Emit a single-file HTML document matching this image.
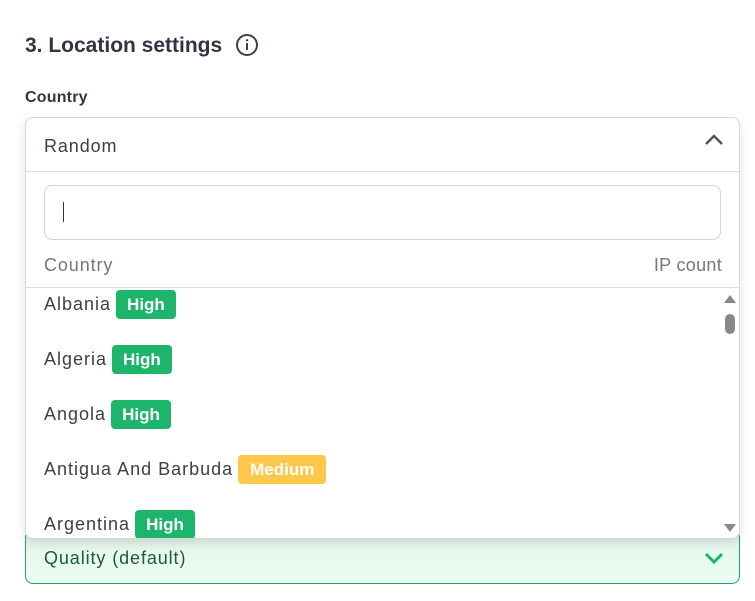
<!DOCTYPE html>
<html><head><style>
body{margin:0;width:755px;height:601px;background:#fff;font-family:"Liberation Sans",sans-serif;position:relative;overflow:hidden;color:#3b404b}
.abs{position:absolute}
h1{position:absolute;left:25px;top:34px;margin:0;font-size:21px;font-weight:bold;color:#2f3542}
.lbl{left:25px;top:89px;font-size:16px;font-weight:bold;color:#2f3542;letter-spacing:.2px}
.t{letter-spacing:.9px}
.qual{left:25px;top:530px;width:713px;height:52px;border:1px solid #20a66a;border-radius:8px;background:linear-gradient(#e3f5ea,#ecfdf2);}
.qual span{position:absolute;left:18px;top:17px;font-size:18px;color:#1e5a3a;letter-spacing:.9px}
.dd{left:25px;top:117px;width:713px;height:420px;border:1px solid #d8d8d8;border-radius:8px;background:#fff;box-shadow:0 4px 10px rgba(0,0,0,.12);overflow:hidden}
.row{position:absolute;left:18px;font-size:18px;display:flex;align-items:center;height:30px;letter-spacing:1px}
.b{display:inline-block;margin-left:5px;padding:0 11px;height:29px;line-height:29px;border-radius:4px;color:#fff;font-weight:bold;font-size:17px;background:#1db46c;letter-spacing:0}
.m{background:#fec84b;padding:0 12px}
</style></head><body>
<h1>3. Location settings</h1>
<svg class="abs" style="left:235px;top:33px" width="24" height="24" viewBox="0 0 24 24"><circle cx="12" cy="12" r="10" fill="none" stroke="#3b404b" stroke-width="2"/><rect x="11" y="10" width="2" height="7" fill="#3b404b"/><circle cx="12" cy="7.3" r="1.2" fill="#3b404b"/></svg>
<div class="abs lbl">Country</div>
<div class="abs qual"><span>Quality (default)</span>
<svg class="abs" style="left:678px;top:20px" width="20" height="14" viewBox="0 0 20 14"><path d="M2 3l8 8 8-8" fill="none" stroke="#1db46c" stroke-width="3"/></svg></div>
<div class="abs dd">
 <div class="abs t" style="left:18px;top:18px;font-size:18px">Random</div>
 <svg class="abs" style="left:678px;top:15px" width="20" height="14" viewBox="0 0 20 14"><path d="M2 11l8-8 8 8" fill="none" stroke="#555" stroke-width="2.5"/></svg>
 <div class="abs" style="left:0;top:53px;width:713px;height:1px;background:#ddd"></div>
 <div class="abs" style="left:18px;top:67px;width:675px;height:53px;border:1px solid #d4d4d4;border-radius:8px"></div>
 <div class="abs" style="left:37px;top:84px;width:1px;height:20px;background:#333"></div>
 <div class="abs t" style="left:18px;top:137px;font-size:18px;color:#777">Country</div>
 <div class="abs t" style="right:17px;top:137px;font-size:18px;color:#777;letter-spacing:.3px">IP count</div>
 <div class="abs" style="left:0;top:169px;width:713px;height:1px;background:#ddd"></div>
 <div class="row" style="top:171px">Albania<span class="b">High</span></div>
 <div class="row" style="top:226px">Algeria<span class="b">High</span></div>
 <div class="row" style="top:281px">Angola<span class="b">High</span></div>
 <div class="row" style="top:336px">Antigua And Barbuda<span class="b m">Medium</span></div>
 <div class="row" style="top:391px">Argentina<span class="b">High</span></div>
 <svg class="abs" style="left:697px;top:176px" width="14" height="10"><path d="M1 9l6-8 6 8z" fill="#888"/></svg>
 <div class="abs" style="left:699px;top:196px;width:10px;height:20px;border-radius:5px;background:#888"></div>
 <svg class="abs" style="left:697px;top:405px" width="14" height="10"><path d="M1 1l6 8 6-8z" fill="#888"/></svg>
</div>
</body></html>
